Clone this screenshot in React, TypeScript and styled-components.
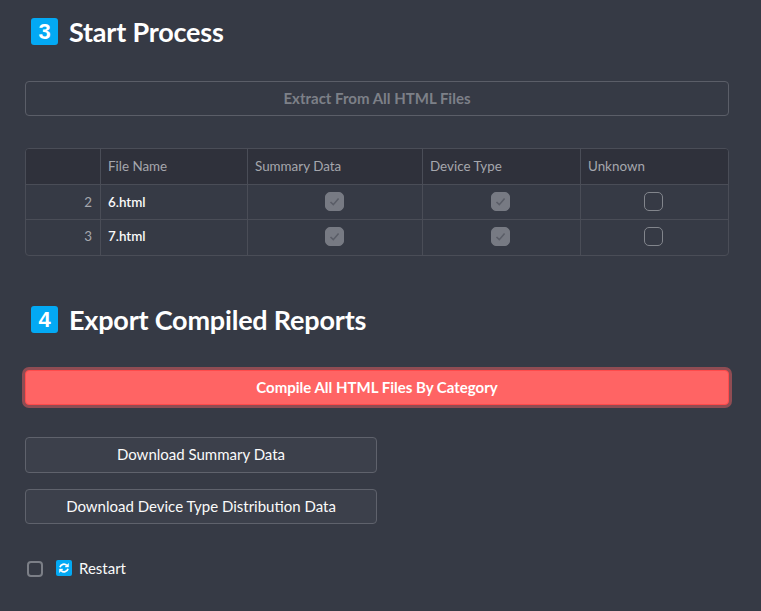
import styled, { createGlobalStyle } from 'styled-components';

const GlobalStyle = createGlobalStyle`
  html, body {
    margin: 0;
    padding: 0;
    background-color: #363a45;
  }
  body {
    font-family: "Lato", "Noto Sans", "Liberation Sans", sans-serif;
    color: #fafafa;
  }
`;

const Page = styled.main`
  width: 761px;
  height: 611px;
  box-sizing: border-box;
  padding: 18px 32px 0 25px;
  overflow: hidden;
`;

const Heading = styled.h2<{ $gap: number }>`
  display: flex;
  align-items: center;
  gap: 11px;
  height: 27px;
  margin: 0 0 ${(p) => p.$gap}px 6px;
  font-size: 27px;
  font-weight: 700;
  letter-spacing: -0.2px;
  line-height: 25px;
  color: #fff;
`;

const NumberBadge = styled.span`
  display: flex;
  align-items: center;
  justify-content: center;
  width: 27px;
  height: 27px;
  border-radius: 3px;
  background-color: #03a9f4;
  font-family: "Liberation Sans", sans-serif;
  font-size: 22px;
  font-weight: 700;
  letter-spacing: 0;
  color: #fff;
`;

const Button = styled.button<{ $wide?: boolean; $height?: number; $disabled?: boolean }>`
  display: block;
  width: ${(p) => (p.$wide ? '704px' : '352px')};
  height: ${(p) => p.$height ?? 36}px;
  padding: 0 0 2px;
  border: 1px solid ${(p) => (p.$disabled ? '#5b5e68' : '#5f626c')};
  border-radius: 4px;
  background-color: ${(p) => (p.$disabled ? 'transparent' : '#3c404b')};
  font-family: inherit;
  font-size: 15px;
  font-weight: ${(p) => (p.$disabled ? 700 : 400)};
  color: ${(p) => (p.$disabled ? '#7d8088' : '#fafafa')};
`;

const PrimaryButton = styled(Button)`
  border-color: #ff4b4b;
  background-color: #ff6464;
  box-shadow: 0 0 0 3px rgba(255, 100, 100, 0.45);
  font-weight: 700;
  color: #fff;
`;

const Table = styled.div`
  display: grid;
  grid-template-columns: 75px 147px 175px 158px 1fr;
  grid-template-rows: 36px 35px 35px;
  width: 704px;
  box-sizing: border-box;
  margin: 32px 0 50px;
  border: 1px solid #4a4d57;
  border-radius: 4px;
  overflow: hidden;
  font-size: 13.4px;
`;

const HeaderCell = styled.div`
  display: flex;
  align-items: center;
  padding: 0 0 2px 7px;
  background-color: #2f313b;
  border-right: 1px solid #4a4d57;
  border-bottom: 1px solid #4a4d57;
  color: #a5a7ad;

  &:nth-child(5) {
    border-right: 0;
  }
`;

const Cell = styled.div<{ $align?: string }>`
  display: flex;
  align-items: center;
  justify-content: ${(p) => p.$align ?? 'flex-start'};
  padding: 0 9px 1px 7px;
  border-right: 1px solid #4a4d57;
  border-bottom: 1px solid #4a4d57;

  &:nth-child(5n) {
    border-right: 0;
  }
  &:nth-last-child(-n + 5) {
    border-bottom: 0;
    padding-bottom: 3px;
  }
`;

const RowNumber = styled(Cell)`
  padding-right: 8px;
  color: #a5a7ad;
`;

const FileName = styled(Cell)`
  font-weight: 600;
  color: #fafafa;
`;

const Check = styled.span<{ $checked?: boolean }>`
  display: flex;
  align-items: center;
  justify-content: center;
  width: 19px;
  height: 19px;
  box-sizing: border-box;
  border-radius: 5px;
  border: 1px solid ${(p) => (p.$checked ? '#777a83' : '#82858c')};
  background-color: ${(p) => (p.$checked ? '#777a83' : 'transparent')};
`;

const ButtonStack = styled.div`
  display: flex;
  flex-direction: column;
  gap: 16px;
  margin-top: 32px;
`;

const RestartRow = styled.label`
  display: flex;
  align-items: center;
  height: 18px;
  margin: 35px 0 0 2px;
  font-size: 15px;
`;

const RestartBox = styled.span`
  width: 16px;
  height: 16px;
  box-sizing: border-box;
  margin: 1px 13px 0 0;
  border: 2px solid #7c7f87;
  border-radius: 4px;
`;

const RestartIcon = styled.span`
  display: flex;
  align-items: center;
  justify-content: center;
  width: 16px;
  height: 16px;
  margin: 0 7px 1px 0;
  border-radius: 2px;
  background-color: #03a9f4;
`;

const Tick = () => (
  <svg width="13" height="13" viewBox="0 0 13 13" fill="none">
    <path d="M2.5 7l2.8 2.7L10.6 3.6" stroke="#5a5d67" strokeWidth="1.6" />
  </svg>
);

const Refresh = () => (
  <svg width="12" height="12" viewBox="0 0 12 12" fill="none" stroke="#fff" strokeWidth="1.8">
    <path d="M2 5.2A4 4 0 0 1 8.8 3.4" />
    <path d="M10 6.8A4 4 0 0 1 3.2 8.6" />
    <path d="M10.6 1.4v3.6H7L10.6 1.4z" fill="#fff" strokeWidth="0.4" />
    <path d="M1.4 10.6V7H5L1.4 10.6z" fill="#fff" strokeWidth="0.4" />
  </svg>
);

const rows = [
  { index: 2, name: '6.html' },
  { index: 3, name: '7.html' },
];

export default function App() {
  return (
    <>
      <GlobalStyle />
      <Page>
        <Heading $gap={36}>
          <NumberBadge>3</NumberBadge>
          Start Process
        </Heading>
        <Button $wide $height={35} $disabled>
          Extract From All HTML Files
        </Button>

        <Table>
          <HeaderCell />
          <HeaderCell>File Name</HeaderCell>
          <HeaderCell>Summary Data</HeaderCell>
          <HeaderCell>Device Type</HeaderCell>
          <HeaderCell>Unknown</HeaderCell>
          {rows.flatMap((row) => [
            <RowNumber key={`${row.index}-n`} $align="flex-end">
              {row.index}
            </RowNumber>,
            <FileName key={`${row.index}-f`}>{row.name}</FileName>,
            <Cell key={`${row.index}-s`} $align="center">
              <Check $checked>
                <Tick />
              </Check>
            </Cell>,
            <Cell key={`${row.index}-d`} $align="center">
              <Check $checked>
                <Tick />
              </Check>
            </Cell>,
            <Cell key={`${row.index}-u`} $align="center">
              <Check />
            </Cell>,
          ])}
        </Table>

        <Heading $gap={37}>
          <NumberBadge>4</NumberBadge>
          Export Compiled Reports
        </Heading>
        <PrimaryButton $wide $height={35}>
          Compile All HTML Files By Category
        </PrimaryButton>

        <ButtonStack>
          <Button>Download Summary Data</Button>
          <Button $height={35}>Download Device Type Distribution Data</Button>
        </ButtonStack>

        <RestartRow>
          <RestartBox />
          <RestartIcon>
            <Refresh />
          </RestartIcon>
          Restart
        </RestartRow>
      </Page>
    </>
  );
}
